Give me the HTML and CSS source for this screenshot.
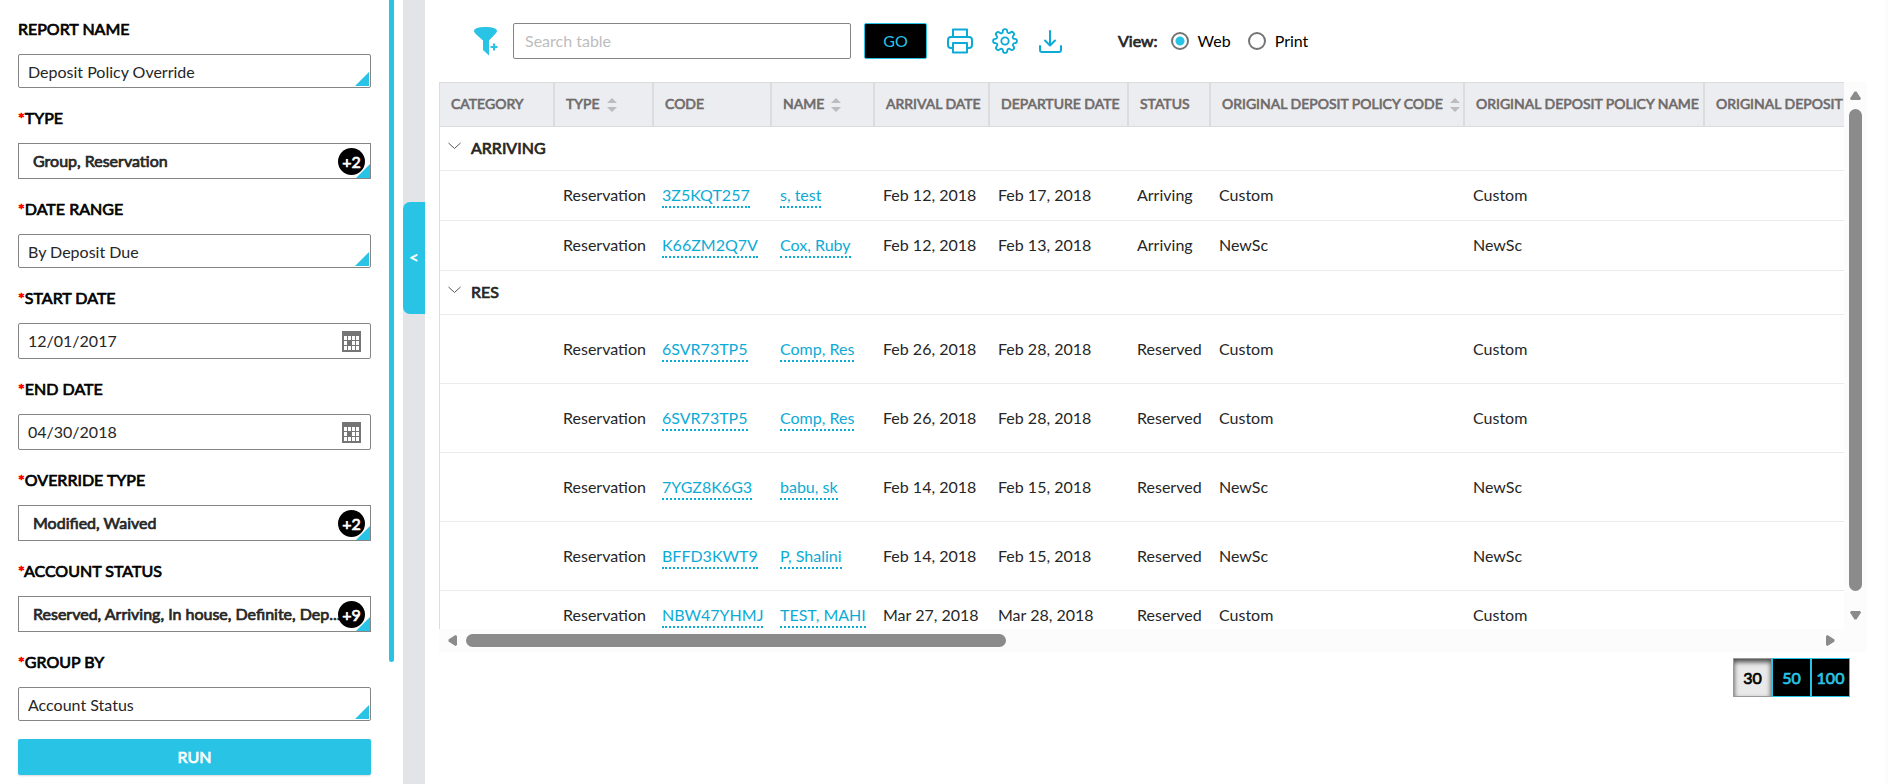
FILE: index.html
```html
<!DOCTYPE html>
<html lang="en">

<head>
    <meta charset="UTF-8">
    <meta name="viewport" content="width=device-width, initial-scale=1.0">
    <title>Deposit Policy Override</title>
    <link rel="stylesheet" href="styles.css">
</head>

<body>

    <!-- Report filters -->
    <aside class="sidebar">
        <form class="filters">
            <div class="field">
                <label for="reportName">REPORT NAME</label>
                <div class="control">
                    <select id="reportName"><option>Deposit Policy Override</option></select>
                </div>
            </div>
            <div class="field">
                <label for="type"><span class="required">*</span>TYPE</label>
                <div class="control multi">
                    <select id="type"><option>Group, Reservation</option></select>
                    <span class="count">+2</span>
                </div>
            </div>
            <div class="field">
                <label for="dateRange"><span class="required">*</span>DATE RANGE</label>
                <div class="control">
                    <select id="dateRange"><option>By Deposit Due</option></select>
                </div>
            </div>
            <div class="field">
                <label for="startDate"><span class="required">*</span>START DATE</label>
                <div class="control date">
                    <input type="text" id="startDate" value="12/01/2017">
                    <button type="button" class="calendar-btn" aria-label="Pick start date">
                        <svg width="19" height="21" viewBox="0 0 19 21"><path fill="#757575" fill-rule="evenodd" d="M0 0h19v21H0zM2 5v4h3V5zm4 0v4h3V5zm4 0v4h3V5zm4 0v4h3V5zM2 10v4h3v-4zm8 0v4h3v-4zm4 0v4h3v-4zM2 15v4h3v-4zm4 0v4h3v-4zm4 0v4h3v-4zm4 0v4h3v-4z"/></svg>
                    </button>
                </div>
            </div>
            <div class="field">
                <label for="endDate"><span class="required">*</span>END DATE</label>
                <div class="control date">
                    <input type="text" id="endDate" value="04/30/2018">
                    <button type="button" class="calendar-btn" aria-label="Pick end date">
                        <svg width="19" height="21" viewBox="0 0 19 21"><path fill="#757575" fill-rule="evenodd" d="M0 0h19v21H0zM2 5v4h3V5zm4 0v4h3V5zm4 0v4h3V5zm4 0v4h3V5zM2 10v4h3v-4zm8 0v4h3v-4zm4 0v4h3v-4zM2 15v4h3v-4zm4 0v4h3v-4zm4 0v4h3v-4zm4 0v4h3v-4z"/></svg>
                    </button>
                </div>
            </div>
            <div class="field">
                <label for="overrideType"><span class="required">*</span>OVERRIDE TYPE</label>
                <div class="control multi">
                    <select id="overrideType"><option>Modified, Waived</option></select>
                    <span class="count">+2</span>
                </div>
            </div>
            <div class="field">
                <label for="accountStatus"><span class="required">*</span>ACCOUNT STATUS</label>
                <div class="control multi">
                    <select id="accountStatus"><option>Reserved, Arriving, In house, Definite, Dep...</option></select>
                    <span class="count">+9</span>
                </div>
            </div>
            <div class="field">
                <label for="groupBy"><span class="required">*</span>GROUP BY</label>
                <div class="control">
                    <select id="groupBy"><option>Account Status</option></select>
                </div>
            </div>
            <button type="button" class="run-btn">RUN</button>
        </form>
        <div class="sidebar-scroll"></div>
    </aside>

    <div class="splitter">
        <button type="button" class="collapse-btn" aria-label="Collapse filters">&lt;</button>
    </div>

    <main class="report">

        <!-- Toolbar -->
        <div class="toolbar">
            <button type="button" class="icon-btn filter-btn" aria-label="Add filter">
                <svg width="24" height="29" viewBox="0 0 24 29"><path fill="#29c3e6" d="M0 4C0 1.300 5 0 11.500 0S23 1.300 23 4c0 1.500-1.500 2.700-2.800 4L15 13.500V28.500L9 23V13.500L2.800 8C1.500 6.700 0 5.500 0 4z"/><path stroke="#fff" stroke-width="1" d="M15.500 13v16"/><path stroke="#29c3e6" stroke-width="2" d="M16.500 20h7M20 16.500v7"/></svg>
            </button>
            <input type="text" class="search" placeholder="Search table" aria-label="Search table">
            <button type="button" class="go-btn">GO</button>
            <div class="tools">
                <button type="button" class="icon-btn" aria-label="Print">
                    <svg width="26" height="26" viewBox="0 0 26 26" fill="none" stroke="#0cabd6" stroke-width="2" stroke-linejoin="round"><path d="M6 9V1.500h14V9M6 20H4a3 3 0 0 1-3-3v-5a3 3 0 0 1 3-3h18a3 3 0 0 1 3 3v5a3 3 0 0 1-3 3h-2M6 15h14v9.500H6z"/></svg>
                </button>
                <button type="button" class="icon-btn" aria-label="Settings">
                    <svg width="26" height="26" viewBox="0 0 24 24" fill="none" stroke="#0cabd6" stroke-width="1.700" stroke-linejoin="round"><circle cx="12" cy="12" r="3.400"/><path d="M19.400 15a1.650 1.650 0 0 0 .33 1.820l.06.06a2 2 0 0 1-2.830 2.830l-.06-.06a1.650 1.650 0 0 0-2.800 1.170V21a2 2 0 0 1-4 0v-.09a1.650 1.650 0 0 0-2.900-1.180l-.06.06a2 2 0 0 1-2.830-2.830l.06-.06A1.650 1.650 0 0 0 3.090 14H3a2 2 0 0 1 0-4h.09a1.650 1.650 0 0 0 1.180-2.820l-.06-.06a2 2 0 0 1 2.830-2.830l.06.06A1.650 1.650 0 0 0 10 3.090V3a2 2 0 0 1 4 0v.09a1.650 1.650 0 0 0 2.820 1.180l.06-.06a2 2 0 0 1 2.830 2.830l-.06.06A1.650 1.650 0 0 0 20.910 10H21a2 2 0 0 1 0 4h-.09a1.650 1.650 0 0 0-1.510 1z"/></svg>
                </button>
                <button type="button" class="icon-btn" aria-label="Download">
                    <svg width="26" height="26" viewBox="0 0 26 26" fill="none" stroke="#0cabd6" stroke-width="2" stroke-linecap="round" stroke-linejoin="round"><path d="M13 3v14M8 12.500l5 5 5-5M3 18v4a2 2 0 0 0 2 2h17a2 2 0 0 0 2-2v-4"/></svg>
                </button>
            </div>
            <div class="view" role="radiogroup" aria-labelledby="viewLabel">
                <span class="view-label" id="viewLabel">View:</span>
                <input type="radio" name="view" id="viewWeb" checked>
                <label for="viewWeb">Web</label>
                <input type="radio" name="view" id="viewPrint">
                <label for="viewPrint">Print</label>
            </div>
        </div>

        <!-- Results -->
        <div class="grid">
            <div class="grid-body">
                <table id="report-table">
                    <colgroup>
                        <col class="col-category">
                        <col class="col-type">
                        <col class="col-code">
                        <col class="col-name">
                        <col class="col-arrival">
                        <col class="col-departure">
                        <col class="col-status">
                        <col class="col-policy-code">
                        <col class="col-policy-name">
                        <col class="col-policy-rule">
                    </colgroup>
                    <thead>
                        <tr>
                            <th>CATEGORY</th>
                            <th>TYPE<svg class="sort" width="10" height="14" viewBox="0 0 10 14"><path fill="#bcbcbc" d="M5 0l5 5H0zM0 9h10l-5 5z"/></svg></th>
                            <th>CODE</th>
                            <th>NAME<svg class="sort" width="10" height="14" viewBox="0 0 10 14"><path fill="#bcbcbc" d="M5 0l5 5H0zM0 9h10l-5 5z"/></svg></th>
                            <th>ARRIVAL DATE</th>
                            <th>DEPARTURE DATE</th>
                            <th>STATUS</th>
                            <th>ORIGINAL DEPOSIT POLICY CODE<svg class="sort" width="10" height="14" viewBox="0 0 10 14"><path fill="#bcbcbc" d="M5 0l5 5H0zM0 9h10l-5 5z"/></svg></th>
                            <th>ORIGINAL DEPOSIT POLICY NAME</th>
                            <th>ORIGINAL DEPOSIT POLICY</th>
                        </tr>
                    </thead>
                    <tbody id="tableBody">

                    </tbody>
                </table>
            </div>
            <div class="scroll-y">
                <svg width="11" height="9" viewBox="0 0 11 9"><path fill="#8b8b8b" d="M4.500.500h2L11 7.500 10 9H1L0 7.500z"/></svg>
                <div class="thumb"></div>
                <svg width="11" height="9" viewBox="0 0 11 9"><path fill="#8b8b8b" d="M1 0h9l1 1.500L6.500 8.500h-2L0 1.500z"/></svg>
            </div>
            <div class="scroll-x">
                <svg width="9" height="11" viewBox="0 0 9 11"><path fill="#8b8b8b" d="M.5 4.500v2L7.500 11 9 10V1L7.500 0z"/></svg>
                <div class="track"><div class="thumb"></div></div>
                <svg width="9" height="11" viewBox="0 0 9 11"><path fill="#8b8b8b" d="M8.500 4.500v2L1.500 11 0 10V1L1.500 0z"/></svg>
            </div>
        </div>

        <!-- Page size -->
        <div class="page-size">
            <button type="button" class="active">30</button>
            <button type="button">50</button>
            <button type="button">100</button>
        </div>

    </main>

    <script>
        let tableBody = document.querySelector("#report-table tbody")

        let groups = [
            {
                "title": "ARRIVING",
                "rowClass": "row",
                "rows": [
                    ["3Z5KQT257", "s, test", "Feb 12, 2018", "Feb 17, 2018", "Arriving", "Custom"],
                    ["K66ZM2Q7V", "Cox, Ruby", "Feb 12, 2018", "Feb 13, 2018", "Arriving", "NewSc"]
                ]
            },
            {
                "title": "RES",
                "rowClass": "row tall",
                "rows": [
                    ["6SVR73TP5", "Comp, Res", "Feb 26, 2018", "Feb 28, 2018", "Reserved", "Custom"],
                    ["6SVR73TP5", "Comp, Res", "Feb 26, 2018", "Feb 28, 2018", "Reserved", "Custom"],
                    ["7YGZ8K6G3", "babu, sk", "Feb 14, 2018", "Feb 15, 2018", "Reserved", "NewSc"],
                    ["BFFD3KWT9", "P, Shalini", "Feb 14, 2018", "Feb 15, 2018", "Reserved", "NewSc"],
                    ["NBW47YHMJ", "TEST, MAHI", "Mar 27, 2018", "Mar 28, 2018", "Reserved", "Custom", "row"]
                ]
            }
        ];

        groups.forEach(group => {
            let groupRow = document.createElement('tr');
            groupRow.className = 'group';
            groupRow.innerHTML = `
                <td colspan="10">
                    <svg class="chevron" width="13" height="8" viewBox="0 0 13 8"><path fill="none" stroke="#555" d="M.5 1l6 5.500 6-5.500"/></svg>${group.title}
                </td>
                `;
            tableBody.appendChild(groupRow);

            group.rows.forEach(([code, name, arrival, departure, status, policy, rowClass]) => {
                let tableRow = document.createElement('tr');
                tableRow.className = rowClass || group.rowClass;
                tableRow.innerHTML = `
                    <td></td>
                    <td>Reservation</td>
                    <td><a href="#">${code}</a></td>
                    <td><a href="#">${name}</a></td>
                    <td>${arrival}</td>
                    <td>${departure}</td>
                    <td>${status}</td>
                    <td>${policy}</td>
                    <td>${policy}</td>
                    <td></td>
                    `;
                tableBody.appendChild(tableRow);
            });
        });
    </script>
</body>

</html>
```

FILE: styles.css
```css
* {
    box-sizing: border-box;
}

body {
    display: flex;
    height: 100vh;
    margin: 0;
    overflow: hidden;
    background-color: #fff;
    color: #262626;
    font-family: Lato, "Liberation Sans", sans-serif;
    font-size: 16px;
    line-height: 20px;
}

button,
input,
select {
    font: inherit;
    color: inherit;
}

button {
    padding: 0;
    border: none;
    cursor: pointer;
}

svg {
    display: block;
}

/* Heavier text on the regular cut */
th,
.group td,
.field label,
.multi select,
.count,
.run-btn,
.collapse-btn,
.view-label,
.page-size button {
    font-weight: normal;
    -webkit-text-stroke: 0.045em currentColor;
}

/*--------------Sidebar-------------*/
.sidebar {
    display: flex;
    flex: 0 0 403px;
    justify-content: space-between;
    padding: 0 9px 0 18px;
}

.filters {
    display: flex;
    flex-direction: column;
    width: 353px;
    padding-top: 19px;
}

.field {
    margin-bottom: 20px;
}

.field:last-of-type {
    margin-bottom: 18px;
}

.field label {
    display: block;
    margin-bottom: 15px;
    color: #000;
}

.required {
    color: #f00;
}

.control {
    position: relative;
    height: 34px;
}

.control select,
.control input {
    display: block;
    width: 100%;
    height: 100%;
    padding: 2px 9px 0;
    border: 1px solid #858585;
    border-radius: 2px;
    background-color: #fff;
    appearance: none;
}

/* Blue corner of the drop-downs */
.control::after {
    content: "";
    position: absolute;
    right: 2px;
    bottom: 2px;
    width: 14px;
    height: 14px;
    background-color: #29c3e6;
    clip-path: polygon(100% 0, 100% 100%, 0 100%);
    pointer-events: none;
}

.multi,
.date {
    height: 36px;
}

.multi select {
    padding: 0 14px;
    border-radius: 0;
}

.multi::after {
    right: 1px;
    bottom: 1px;
}

.count {
    position: absolute;
    top: 5px;
    right: 6px;
    width: 27px;
    height: 27px;
    border-radius: 50%;
    background-color: #000;
    color: #fff;
    line-height: 27px;
    text-align: center;
    pointer-events: none;
}

.date input {
    padding: 0 9px 2px;
}

.date::after {
    display: none;
}

.calendar-btn {
    position: absolute;
    top: 8px;
    right: 10px;
    background: none;
}

.run-btn {
    height: 36px;
    border-radius: 2px;
    background-color: #29c3e6;
    box-shadow: 0 1px 2px rgba(0, 0, 0, 0.15);
    color: #fff;
}

.sidebar-scroll {
    width: 5px;
    height: calc(100% - 122px);
    border-radius: 0 0 3px 3px;
    background-color: #29c3e6;
}

/*--------------Splitter-------------*/
.splitter {
    flex: 0 0 22px;
    padding-top: 202px;
    background-color: #e3e4e8;
}

.collapse-btn {
    width: 22px;
    height: 112px;
    padding-bottom: 2px;
    border-radius: 7px 0 0 7px;
    background-color: #29c3e6;
    color: #fff;
}

/*--------------Toolbar-------------*/
.report {
    display: flex;
    flex: 1;
    flex-direction: column;
    min-width: 0;
    padding: 23px 18px 0 14px;
    border-right: 3px solid #fcfcfc;
}

.toolbar {
    display: flex;
    align-items: center;
    height: 36px;
    margin-bottom: 23px;
    padding-left: 35px;
}

.icon-btn {
    background: none;
}

.search {
    width: 338px;
    height: 36px;
    margin: 0 13px 0 15px;
    padding: 0 11px 2px;
    border: 1px solid #858585;
    border-radius: 2px;
}

.search::placeholder {
    color: #bdbdbd;
}

.go-btn {
    width: 63px;
    height: 36px;
    border: 1px solid #29c3e6;
    border-radius: 2px;
    background-color: #000;
    color: #29c3e6;
}

.tools {
    display: flex;
    gap: 19px;
    margin: 0 55px 0 20px;
}

.view {
    display: flex;
    align-items: center;
    color: #000;
}

.view-label {
    margin-right: 13px;
    color: #262626;
}

.view input {
    width: 18px;
    height: 18px;
    margin: 0 9px 0 0;
    border: 2px solid #757575;
    border-radius: 50%;
    appearance: none;
}

.view input:checked {
    background: radial-gradient(circle, #29c3e6 4px, #fff 5px);
}

.view label {
    margin-right: 17px;
}

/*--------------Table-------------*/
.grid {
    display: grid;
    flex: 0 0 calc(100% - 191px);
    grid-template-columns: minmax(0, 1fr) 23px;
    grid-template-rows: minmax(0, 1fr) 23px;
    height: calc(100% - 191px);
    min-height: 0;
    background-color: #fcfcfc;
}

.grid-body {
    min-height: 0;
    overflow: hidden;
    border-left: 1px solid #dcdcdc;
    background-color: #fff;
}

table {
    width: 1525px;
    table-layout: fixed;
    border-collapse: separate;
    border-spacing: 0;
}

.col-category,
.col-arrival {
    width: 115px;
}

.col-type {
    width: 99px;
}

.col-code {
    width: 118px;
}

.col-name {
    width: 103px;
}

.col-departure {
    width: 139px;
}

.col-status {
    width: 82px;
}

.col-policy-code {
    width: 254px;
}

.col-policy-name {
    width: 240px;
}

.col-policy-rule {
    width: 260px;
}

th {
    height: 45px;
    padding: 0 0 2px 11px;
    border: solid #dcdcdc;
    border-width: 1px 2px 1px 0;
    background-color: #ecedf1;
    color: #6e6a69;
    font-size: 14px;
    text-align: left;
    white-space: nowrap;
}

td {
    height: 50px;
    padding: 0 0 1px 8px;
    border-bottom: 1px solid #ebebeb;
    white-space: nowrap;
}

.tall td {
    height: 69px;
}

.group td {
    height: 44px;
}

.sort,
.chevron {
    display: inline-block;
}

.sort {
    margin-left: 7px;
    vertical-align: middle;
}

.chevron {
    margin-right: 10px;
    vertical-align: 4px;
}

td a {
    padding-bottom: 2px;
    border-bottom: 2px dotted #0cabd6;
    color: #0cabd6;
    text-decoration: none;
}

/*--------------Scrollbars-------------*/
.scroll-y {
    display: flex;
    flex-direction: column;
    align-items: center;
    padding: 9px 0;
}

.scroll-y .thumb {
    flex: 1;
    width: 13px;
    margin: 9px 0 20px;
}

.scroll-x {
    display: flex;
    align-items: center;
    padding: 0 9px;
}

.track {
    flex: 1;
    margin: 0 9px;
}

.scroll-x .thumb {
    width: 40%;
    height: 13px;
}

.thumb {
    border-radius: 7px;
    background-color: #8b8b8b;
}

/*--------------Page size-------------*/
.page-size {
    display: flex;
    justify-content: flex-end;
    margin: 6px 17px 0 0;
}

.page-size button {
    width: 39px;
    height: 39px;
    border: 1px solid #29c3e6;
    background-color: #000;
    color: #29c3e6;
}

.page-size .active {
    border-color: #999;
    background-color: #e9e9e9;
    box-shadow: inset 0 3px 5px rgba(0, 0, 0, 0.7);
    color: #000;
}
```
